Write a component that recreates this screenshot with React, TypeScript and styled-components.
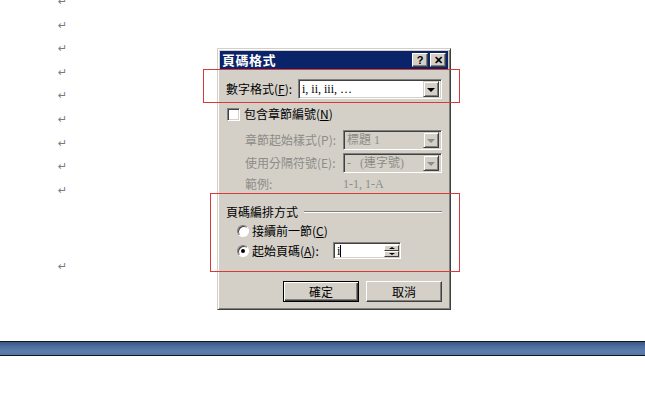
import styled, { createGlobalStyle } from "styled-components";

const GlobalStyle = createGlobalStyle`
  html, body {
    margin: 0;
    padding: 0;
    background: #ffffff;
  }
  body {
    font-family: "Noto Sans CJK TC", "Liberation Sans", sans-serif;
  }
`;

const marks = [0, 1, 2, 3, 4, 5, 6, 7, 8];

export default function App() {
  return (
    <>
      <GlobalStyle />
      <Page>
        <DocArea>
          <MarkColumn>
            {marks.map((m) => (
              <MarkLine key={m}>↵</MarkLine>
            ))}
            <MarkGap />
            <MarkLine>↵</MarkLine>
          </MarkColumn>
        </DocArea>
        <BlueBar />
        <BottomArea />

        <Dialog>
          <TitleBar>
            <TitleText>頁碼格式</TitleText>
            <TitleButtons>
              <TitleButton>?</TitleButton>
              <TitleButton>✕</TitleButton>
            </TitleButtons>
          </TitleBar>

          <Body>
            <FormatRow>
              <Label $width={72}>
                數字格式(<u>F</u>):
              </Label>
              <Combo $width={145}>
                <ComboValue>i, ii, iii, …</ComboValue>
                <ArrowButton>
                  <ArrowDown />
                </ArrowButton>
              </Combo>
            </FormatRow>

            <CheckRow>
              <CheckBox />
              <Label>
                包含章節編號(<u>N</u>)
              </Label>
            </CheckRow>

            <SubRow $top={6}>
              <Label $width={98} $disabled>
                章節起始樣式(P):
              </Label>
              <Combo $width={99} $disabled>
                <ComboValue $disabled>標題 1</ComboValue>
                <ArrowButton>
                  <ArrowDown $disabled />
                </ArrowButton>
              </Combo>
            </SubRow>

            <SubRow $top={3}>
              <Label $width={98} $disabled>
                使用分隔符號(E):
              </Label>
              <Combo $width={99} $disabled>
                <ComboValue $disabled>-&nbsp;&nbsp;&nbsp;(連字號)</ComboValue>
                <ArrowButton>
                  <ArrowDown $disabled />
                </ArrowButton>
              </Combo>
            </SubRow>

            <ExampleRow>
              <Label $width={98} $disabled>
                範例:
              </Label>
              <ExampleText>1-1, 1-A</ExampleText>
            </ExampleRow>

            <GroupHeading>
              <Label>頁碼編排方式</Label>
              <GroupLine />
            </GroupHeading>

            <RadioRow $top={3}>
              <Radio />
              <Label>
                接續前一節(<u>C</u>)
              </Label>
            </RadioRow>

            <RadioRow $top={3}>
              <Radio $checked />
              <Label $width={78}>
                起始頁碼(<u>A</u>):
              </Label>
              <Spin>
                <SpinField>
                  <span>i</span>
                  <Caret />
                </SpinField>
                <SpinButtons>
                  <SpinButton>
                    <ArrowUpSmall />
                  </SpinButton>
                  <SpinButton>
                    <ArrowDownSmall />
                  </SpinButton>
                </SpinButtons>
              </Spin>
            </RadioRow>

            <ButtonRow>
              <PushButton $default>確定</PushButton>
              <PushButton>取消</PushButton>
            </ButtonRow>
          </Body>
        </Dialog>

        <Highlight $left={203} $top={69} $width={257} $height={34} />
        <Highlight $left={210} $top={193} $width={250} $height={79} />
      </Page>
    </>
  );
}

const Page = styled.div`
  position: relative;
  width: 645px;
  height: 414px;
  overflow: hidden;
  display: flex;
  flex-direction: column;
  background: #ffffff;
`;

const DocArea = styled.div`
  height: 341px;
  padding-left: 58px;
  overflow: hidden;
`;

const MarkColumn = styled.div`
  margin-top: -10px;
  display: flex;
  flex-direction: column;
`;

const MarkLine = styled.div`
  height: 23.6px;
  line-height: 23.6px;
  font-family: "DejaVu Sans", sans-serif;
  font-size: 11px;
  color: #7a7a7a;
`;

const MarkGap = styled.div`
  height: 52.4px;
`;

const BlueBar = styled.div`
  height: 13px;
  border-top: 1px solid #101820;
  border-bottom: 1px solid #101820;
  background: linear-gradient(#3a5683 0%, #4c6d9e 35%, #5a7cad 70%, #5877a7 100%);
`;

const BottomArea = styled.div`
  flex: 1;
  background: #ffffff;
`;

const Dialog = styled.div`
  position: absolute;
  left: 217px;
  top: 48px;
  width: 234px;
  height: 262px;
  box-sizing: border-box;
  background: #d4d0c8;
  border: 1px solid;
  border-color: #d4d0c8 #404040 #404040 #d4d0c8;
  box-shadow: inset 1px 1px #ffffff, inset -1px -1px #808080;
  padding: 2px;
  display: flex;
  flex-direction: column;
`;

const TitleBar = styled.div`
  height: 18px;
  background: #0a246a;
  display: flex;
  align-items: center;
  justify-content: space-between;
  padding: 0 2px 0 2px;
`;

const TitleText = styled.span`
  color: #ffffff;
  font-weight: bold;
  font-size: 13px;
  letter-spacing: 0.5px;
  line-height: 18px;
`;

const TitleButtons = styled.div`
  display: flex;
  gap: 2px;
`;

const TitleButton = styled.div`
  width: 16px;
  height: 14px;
  box-sizing: border-box;
  background: #d4d0c8;
  border: 1px solid;
  border-color: #ffffff #404040 #404040 #ffffff;
  box-shadow: inset -1px -1px #808080;
  display: flex;
  align-items: center;
  justify-content: center;
  font-family: "Liberation Sans", sans-serif;
  font-weight: bold;
  font-size: 11px;
  line-height: 1;
  color: #000;
`;

const Body = styled.div`
  display: flex;
  flex-direction: column;
  padding: 0 6px 6px 6px;
`;

const Label = styled.span<{ $width?: number; $disabled?: boolean }>`
  ${(p) => (p.$width ? `width: ${p.$width}px; flex-shrink: 0;` : "")}
  font-size: 12px;
  line-height: 14px;
  white-space: nowrap;
  color: ${(p) => (p.$disabled ? "#8e8c87" : "#000000")};
  u {
    text-decoration: underline;
  }
`;

const FormatRow = styled.div`
  margin-top: 10px;
  height: 20px;
  display: flex;
  align-items: center;
`;

const CheckRow = styled.div`
  margin-top: 5px;
  height: 20px;
  display: flex;
  align-items: center;
  gap: 4px;
  padding-left: 1px;
`;

const CheckBox = styled.div`
  width: 13px;
  height: 13px;
  box-sizing: border-box;
  background: #ffffff;
  border: 1px solid;
  border-color: #808080 #ffffff #ffffff #808080;
  box-shadow: inset 1px 1px #404040, inset -1px -1px #d4d0c8;
`;

const SubRow = styled.div<{ $top: number }>`
  margin-top: ${(p) => p.$top}px;
  padding-left: 19px;
  height: 20px;
  display: flex;
  align-items: center;
`;

const Combo = styled.div<{ $width: number; $disabled?: boolean }>`
  width: ${(p) => p.$width}px;
  height: 20px;
  box-sizing: border-box;
  background: ${(p) => (p.$disabled ? "#d4d0c8" : "#ffffff")};
  border: 1px solid;
  border-color: #808080 #ffffff #ffffff #808080;
  box-shadow: inset 1px 1px #404040, inset -1px -1px #d4d0c8;
  padding: 2px;
  display: flex;
  align-items: center;
  justify-content: space-between;
`;

const ComboValue = styled.span<{ $disabled?: boolean }>`
  font-family: "Liberation Serif", "Noto Sans CJK TC", serif;
  font-size: 12px;
  line-height: 14px;
  white-space: nowrap;
  padding-left: 1px;
  color: ${(p) => (p.$disabled ? "#8e8c87" : "#000000")};
`;

const ArrowButton = styled.div`
  width: 16px;
  height: 16px;
  box-sizing: border-box;
  background: #d4d0c8;
  border: 1px solid;
  border-color: #d4d0c8 #404040 #404040 #d4d0c8;
  box-shadow: inset 1px 1px #ffffff, inset -1px -1px #808080;
  display: flex;
  align-items: center;
  justify-content: center;
`;

const ArrowDown = styled.div<{ $disabled?: boolean }>`
  width: 0;
  height: 0;
  border-left: 4px solid transparent;
  border-right: 4px solid transparent;
  border-top: 4px solid ${(p) => (p.$disabled ? "#8e8c87" : "#000000")};
  margin-top: 1px;
`;

const ExampleRow = styled.div`
  margin-top: 4px;
  padding-left: 19px;
  height: 14px;
  display: flex;
  align-items: center;
`;

const ExampleText = styled.span`
  font-family: "Liberation Serif", serif;
  font-size: 12px;
  color: #8e8c87;
`;

const GroupHeading = styled.div`
  margin-top: 14px;
  height: 14px;
  display: flex;
  align-items: center;
  gap: 6px;
`;

const GroupLine = styled.div`
  flex: 1;
  height: 0;
  border-top: 1px solid #808080;
  border-bottom: 1px solid #ffffff;
`;

const RadioRow = styled.div<{ $top: number }>`
  margin-top: ${(p) => p.$top}px;
  padding-left: 11px;
  height: 17px;
  display: flex;
  align-items: center;
  gap: 3px;
`;

const Radio = styled.div<{ $checked?: boolean }>`
  width: 12px;
  height: 12px;
  box-sizing: border-box;
  border-radius: 50%;
  background: #ffffff;
  border: 1px solid;
  border-color: #808080 #ffffff #ffffff #808080;
  box-shadow: inset 1px 1px #404040;
  display: flex;
  align-items: center;
  justify-content: center;
  &::after {
    content: "";
    width: 4px;
    height: 4px;
    border-radius: 50%;
    background: ${(p) => (p.$checked ? "#000000" : "transparent")};
  }
`;

const Spin = styled.div`
  width: 68px;
  height: 17px;
  box-sizing: border-box;
  background: #ffffff;
  border: 1px solid;
  border-color: #808080 #ffffff #ffffff #808080;
  box-shadow: inset 1px 1px #404040, inset -1px -1px #d4d0c8;
  padding: 2px 1px 1px 2px;
  display: flex;
  align-items: stretch;
`;

const SpinField = styled.div`
  flex: 1;
  display: flex;
  align-items: center;
  font-family: "Liberation Serif", serif;
  font-size: 12px;
  padding-left: 1px;
`;

const Caret = styled.div`
  width: 1px;
  height: 12px;
  background: #000000;
`;

const SpinButtons = styled.div`
  width: 15px;
  display: flex;
  flex-direction: column;
`;

const SpinButton = styled.div`
  flex: 1;
  box-sizing: border-box;
  background: #d4d0c8;
  border: 1px solid;
  border-color: #ffffff #404040 #404040 #ffffff;
  display: flex;
  align-items: center;
  justify-content: center;
`;

const ArrowUpSmall = styled.div`
  width: 0;
  height: 0;
  border-left: 3px solid transparent;
  border-right: 3px solid transparent;
  border-bottom: 2px solid #000000;
`;

const ArrowDownSmall = styled.div`
  width: 0;
  height: 0;
  border-left: 3px solid transparent;
  border-right: 3px solid transparent;
  border-top: 2px solid #000000;
`;

const ButtonRow = styled.div`
  margin-top: 22px;
  display: flex;
  justify-content: flex-end;
  gap: 7px;
`;

const PushButton = styled.div<{ $default?: boolean }>`
  width: 76px;
  height: 21px;
  box-sizing: border-box;
  background: #d4d0c8;
  font-size: 12px;
  display: flex;
  align-items: center;
  justify-content: center;
  color: #000000;
  border: 1px solid;
  border-color: ${(p) =>
    p.$default ? "#000000" : "#ffffff #404040 #404040 #ffffff"};
  box-shadow: ${(p) =>
    p.$default
      ? "inset 1px 1px #ffffff, inset -1px -1px #404040, inset -2px -2px #808080"
      : "inset -1px -1px #808080"};
`;

const Highlight = styled.div<{
  $left: number;
  $top: number;
  $width: number;
  $height: number;
}>`
  position: absolute;
  left: ${(p) => p.$left}px;
  top: ${(p) => p.$top}px;
  width: ${(p) => p.$width}px;
  height: ${(p) => p.$height}px;
  box-sizing: border-box;
  border: 1px solid #d83a3a;
  pointer-events: none;
`;
